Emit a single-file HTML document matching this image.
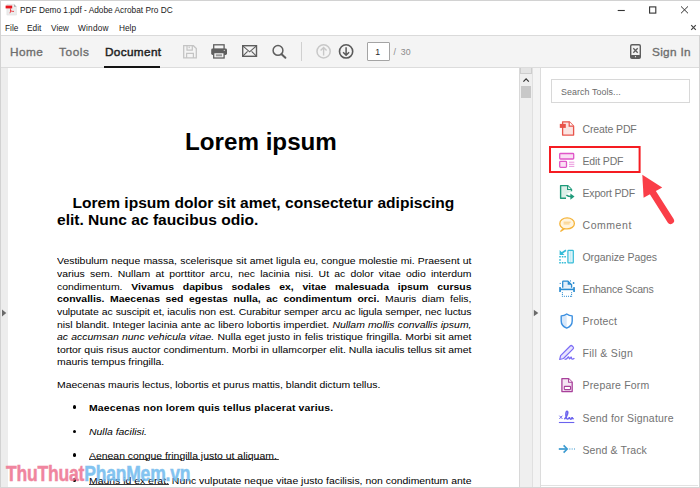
<!DOCTYPE html>
<html><head><meta charset="utf-8">
<style>
*{margin:0;padding:0;box-sizing:border-box}
html,body{width:700px;height:488px;overflow:hidden;background:#fff;font-family:"Liberation Sans",sans-serif}
.a{position:absolute;white-space:nowrap}
.t{line-height:1}
.mn{position:absolute;top:23.5px;font-size:8.3px;line-height:1;color:#1a1a1a;white-space:nowrap}
.tab{position:absolute;top:46.5px;font-size:11.8px;line-height:1;font-weight:normal;color:#6e6e6e;white-space:nowrap;-webkit-text-stroke:0.35px currentColor}
.tl{position:absolute;left:582.5px;font-size:10.5px;line-height:1;color:#727272;white-space:nowrap}
.bl{position:absolute;left:57px;width:345.4px;font-size:8.7px;line-height:8.7px;color:#000;text-align:justify;text-align-last:justify;white-space:nowrap;transform:scaleX(1.2);transform-origin:0 0}
.bl.l{text-align-last:left}
.bu{position:absolute;left:88.5px;font-size:8.7px;line-height:8.7px;color:#000;white-space:nowrap;transform:scaleX(1.2);transform-origin:0 0}
u{text-decoration-thickness:1px;text-underline-offset:0px;text-decoration-color:#3a3a3a}
.dot{position:absolute;left:72.6px;width:3.8px;height:3.8px;border-radius:50%;background:#000}
#ov{position:absolute;left:0;top:0}
</style></head><body>
<!-- frame borders -->
<div class="a" style="left:0;top:0;width:700px;height:1px;background:#d2d2d2"></div>
<div class="a" style="left:0;top:0;width:1px;height:488px;background:#d2d2d2"></div>

<!-- title -->
<div class="a t" style="left:20px;top:5.9px;font-size:8.3px;color:#1a1a1a">PDF Demo 1.pdf - Adobe Acrobat Pro DC</div>

<!-- menu -->
<div class="mn" style="left:5px">File</div>
<div class="mn" style="left:27px">Edit</div>
<div class="mn" style="left:51px">View</div>
<div class="mn" style="left:78px;letter-spacing:0.2px">Window</div>
<div class="mn" style="left:119px">Help</div>

<!-- toolbar -->
<div class="a" style="left:1px;top:35px;width:699px;height:33px;background:#f4f4f4;border-top:1px solid #dadada;border-bottom:1px solid #dcdcdc"></div>
<div class="tab" style="left:10px;letter-spacing:0.45px">Home</div>
<div class="tab" style="left:59px;letter-spacing:0.6px">Tools</div>
<div class="tab" style="left:105px;color:#222;letter-spacing:0.33px;-webkit-text-stroke:0.45px #222">Document</div>
<div class="a" style="left:104px;top:66px;width:56px;height:2px;background:#141414"></div>
<div class="a" style="left:301px;top:42px;width:1px;height:19px;background:#d0d0d0"></div>
<div class="a" style="left:367px;top:42px;width:23px;height:19px;background:#fff;border:1.2px solid #a4a4a4;border-radius:1px"></div>
<div class="a t" style="left:375.3px;top:47.5px;font-size:8.8px;color:#2a2a2a">1</div>
<div class="a t" style="left:393.5px;top:47.5px;font-size:8.8px;color:#8a8a8a">/&nbsp;&nbsp;30</div>
<div class="tab" style="left:652px;letter-spacing:0.3px">Sign In</div>

<!-- document area -->
<div class="a" style="left:1px;top:68px;width:7px;height:420px;background:#ededed"></div>
<div class="a" style="left:519px;top:68px;width:14px;height:420px;background:#efefef;border-left:1px solid #d8d8d8;border-right:1px solid #e0e0e0"></div>
<div class="a" style="left:520px;top:68px;width:12px;height:6px;background:#e4e4e4;border:1px solid #cdcdcd;border-top:none"></div>
<div class="a" style="left:521px;top:86px;width:10px;height:11.5px;background:#c8c8c8"></div>
<div class="a" style="left:533px;top:68px;width:8px;height:420px;background:#f4f4f4;border-right:1px solid #dcdcdc"></div>

<!-- right panel -->
<div class="a" style="left:699px;top:35px;width:1px;height:453px;background:#d4d4d4"></div>
<div class="a" style="left:541px;top:484.5px;width:157px;height:1.5px;background:#e2e2e2"></div>
<div class="a" style="left:0;top:487px;width:700px;height:1px;background:#d6d6d6"></div>
<div class="a" style="left:551px;top:79px;width:139px;height:24px;border:1px solid #d8d8d8;background:#fff"></div>
<div class="a t" style="left:561px;top:88.2px;font-size:8.9px;color:#6a6a6a;letter-spacing:0.08px">Search Tools...</div>

<div class="tl" style="top:124px;letter-spacing:-0.13px">Create PDF</div>
<div class="tl" style="top:156px;letter-spacing:-0.14px">Edit PDF</div>
<div class="tl" style="top:188.1px;letter-spacing:-0.18px">Export PDF</div>
<div class="tl" style="top:220.2px;letter-spacing:0.55px">Comment</div>
<div class="tl" style="top:252.2px;letter-spacing:-0.06px">Organize Pages</div>
<div class="tl" style="top:284.3px;letter-spacing:-0.19px">Enhance Scans</div>
<div class="tl" style="top:316.3px;letter-spacing:0.20px">Protect</div>
<div class="tl" style="top:348.4px;letter-spacing:0.30px">Fill &amp; Sign</div>
<div class="tl" style="top:380.4px;letter-spacing:0.18px">Prepare Form</div>
<div class="tl" style="top:412.5px;letter-spacing:0.21px">Send for Signature</div>
<div class="tl" style="top:444.5px;letter-spacing:0.12px">Send &amp; Track</div>

<!-- page content -->
<div class="a t" style="left:185px;top:129.5px;font-size:24.2px;font-weight:bold;color:#000">Lorem ipsum</div>
<div class="a t" style="left:72.5px;top:194.8px;font-size:15.55px;font-weight:bold;color:#000">Lorem ipsum dolor sit amet, consectetur adipiscing</div>
<div class="a t" style="left:57px;top:211.7px;font-size:15.55px;font-weight:bold;color:#000">elit. Nunc ac faucibus odio.</div>
<div class="bl" style="top:257.43px">Vestibulum neque massa, scelerisque sit amet ligula eu, congue molestie mi. Praesent ut</div>
<div class="bl" style="top:270.05px">varius sem. Nullam at porttitor arcu, nec lacinia nisi. Ut ac dolor vitae odio interdum</div>
<div class="bl" style="top:282.67px">condimentum. <b>Vivamus dapibus sodales ex, vitae malesuada ipsum cursus</b></div>
<div class="bl" style="top:295.29px"><b>convallis. Maecenas sed egestas nulla, ac condimentum orci.</b> Mauris diam felis,</div>
<div class="bl" style="top:307.91px;letter-spacing:-0.06px">vulputate ac suscipit et, iaculis non est. Curabitur semper arcu ac ligula semper, nec luctus</div>
<div class="bl" style="top:320.53px">nisl blandit. Integer lacinia ante ac libero lobortis imperdiet. <i>Nullam mollis convallis ipsum,</i></div>
<div class="bl" style="top:333.15px"><i>ac accumsan nunc vehicula vitae.</i> Nulla eget justo in felis tristique fringilla. Morbi sit amet</div>
<div class="bl" style="top:345.77px">tortor quis risus auctor condimentum. Morbi in ullamcorper elit. Nulla iaculis tellus sit amet</div>
<div class="bl l" style="top:358.39px">mauris tempus fringilla.</div>
<div class="bl l" style="top:381.43px">Maecenas mauris lectus, lobortis et purus mattis, blandit dictum tellus.</div>
<div class="dot" style="top:405.3px"></div>
<div class="bu" style="top:404.23px;letter-spacing:0.13px"><b>Maecenas non lorem quis tellus placerat varius.</b></div>
<div class="dot" style="top:429.6px"></div>
<div class="bu" style="top:428.43px"><i>Nulla facilisi.</i></div>
<div class="dot" style="top:453.4px"></div>
<div class="bu" style="top:451.8px"><u>Aenean congue fringilla justo ut aliquam.&#8201;</u></div>
<div class="dot" style="top:477.8px"></div>
<div class="bu" style="top:477.03px"><u>Mauris id ex erat.</u> Nunc vulputate neque vitae justo facilisis, non condimentum ante</div>

<!-- ICONS OVERLAY -->
<svg id="ov" width="700" height="488" viewBox="0 0 700 488">
<!-- app icon -->
<path d="M6.9 4.3H14.2L16.4 6.5V15.1H6.9Z" fill="#ececec" stroke="#dadada" stroke-width="0.5"/>
<path d="M14 4.3V6.7H16.4Z" fill="#a8a8a8"/>
<rect x="5.6" y="5.6" width="6.6" height="2.8" fill="#e8141c"/>
<path d="M10.4 8.4C10.8 10.5 10.6 12 9.8 13.2M10.6 10.8C11.8 11.3 13 11.6 14 11.4" fill="none" stroke="#e8141c" stroke-width="0.8"/>
<!-- window controls -->
<path d="M617.7 10.5H624.8" stroke="#333" stroke-width="1.1"/>
<rect x="649.6" y="6.9" width="6.2" height="6.2" fill="none" stroke="#333" stroke-width="1.1"/>
<path d="M681 6.4L688 13.3M688 6.4L681 13.3" stroke="#333" stroke-width="1"/>
<path d="M691.2 25.2L695.8 29.8M695.8 25.2L691.2 29.8" stroke="#444" stroke-width="1.2"/>
<!-- save (disabled) -->
<path d="M183.7 45.7H193.4L196.3 48.6V57.9H183.7Z" fill="none" stroke="#c4c4c4" stroke-width="1.3"/>
<path d="M187 45.7V50.2H192.3V45.7" fill="none" stroke="#c4c4c4" stroke-width="1.2"/>
<rect x="188.6" y="46.5" width="1.2" height="1.6" fill="#c4c4c4"/>
<path d="M186.6 57.9V53.3H193.4V57.9" fill="none" stroke="#c4c4c4" stroke-width="1.2"/>
<!-- print -->
<rect x="213.7" y="44.8" width="10.4" height="4.6" fill="none" stroke="#5e5e5e" stroke-width="1.3"/>
<rect x="211.2" y="48.6" width="15.8" height="6.4" rx="1.4" fill="#5e5e5e"/>
<rect x="213.7" y="52.6" width="10.4" height="5.4" fill="#f4f4f4" stroke="#5e5e5e" stroke-width="1.3"/>
<rect x="215.8" y="54.3" width="6.2" height="2" fill="#9a9a9a"/>
<circle cx="224.3" cy="50.4" r="0.6" fill="#cfcfcf"/>
<!-- mail -->
<rect x="242.7" y="45.7" width="13.8" height="10.6" fill="none" stroke="#5e5e5e" stroke-width="1.4"/>
<path d="M242.8 45.9L249.6 51.8L256.4 45.9M242.8 56.2L247.6 51.3M256.4 56.2L251.6 51.3" fill="none" stroke="#5e5e5e" stroke-width="1.1"/>
<!-- search -->
<circle cx="278" cy="50.4" r="4.9" fill="none" stroke="#5e5e5e" stroke-width="1.5"/>
<path d="M281.6 54.2L285.4 57.8" stroke="#5e5e5e" stroke-width="2" stroke-linecap="round"/>
<!-- up/down -->
<circle cx="323.6" cy="51.4" r="6.6" fill="none" stroke="#c8c8c8" stroke-width="1.5"/>
<path d="M323.6 55.5V47.6M320.6 50.6L323.6 47.6L326.6 50.6" fill="none" stroke="#c8c8c8" stroke-width="1.4"/>
<circle cx="346.1" cy="51.4" r="6.6" fill="none" stroke="#5a5a5a" stroke-width="1.6"/>
<path d="M346.1 47.3V55.2M343.1 52.2L346.1 55.2L349.1 52.2" fill="none" stroke="#5a5a5a" stroke-width="1.5"/>
<!-- sign-in device -->
<rect x="630.7" y="44.7" width="9.6" height="13.6" rx="1.3" fill="none" stroke="#5e5e5e" stroke-width="1.4"/>
<rect x="630.7" y="55" width="9.6" height="3.3" rx="0.8" fill="#5e5e5e"/>
<circle cx="635.5" cy="56.7" r="0.6" fill="#f4f4f4"/>
<path d="M633.3 48.3L637.7 52.7M637.7 48.3L633.3 52.7" stroke="#5e5e5e" stroke-width="1.3"/>
<!-- doc area arrows -->
<path d="M2 309.5L6.3 313L2 316.5Z" fill="#6a6a6a"/>
<path d="M533.8 309.8L538.3 313L533.8 316.3Z" fill="#6a6a6a"/>
<path d="M523.4 81.6L526.1 78.9L528.8 81.6" fill="none" stroke="#333" stroke-width="1.2"/>

<!-- tool icons -->
<!-- create pdf -->
<path d="M562.6 121.8H569.2L573.6 126.2V135.1H562.6Z" fill="#fbe4e2" stroke="#e8534a" stroke-width="1.3" stroke-linejoin="round"/>
<path d="M569.2 121.8V126.2H573.6" fill="#fff" stroke="#e8534a" stroke-width="1.2"/>
<rect x="559.8" y="123.9" width="6" height="4" fill="#e8534a"/>
<!-- edit pdf -->
<rect x="559.7" y="153.5" width="14" height="5.5" rx="0.8" fill="#fae0f4" stroke="#e055c8" stroke-width="1.3"/>
<rect x="559.7" y="161.4" width="6.8" height="5.9" rx="0.8" fill="#fae0f4" stroke="#e055c8" stroke-width="1.3"/>
<path d="M569 162.2H574.3M569 164.3H574.3M569 166.4H574.3" stroke="#e98ad8" stroke-width="0.9"/>
<!-- export pdf -->
<path d="M560.6 185.6H567.6L571.5 189.5V191.5L566.3 194V198.2H560.6Z" fill="#dcefe9"/>
<path d="M566 198.2H560.6V185.6H567.6L571.5 189.5V191.2" fill="none" stroke="#1f9a7a" stroke-width="1.4" stroke-linejoin="round"/>
<path d="M567.6 185.8V189.5H571.3" fill="#fff" stroke="#1f9a7a" stroke-width="1.2"/>
<path d="M566.4 195.2Q568.3 196.6 571.2 196.6" fill="none" stroke="#1f9a7a" stroke-width="1.5"/>
<path d="M570.4 193.4L574.5 196.6L570.4 199.8Z" fill="#1f9a7a"/>
<!-- comment -->
<path d="M563.4 228.5Q559.8 226.6 559.8 223.4C559.8 220.1 563.1 217.9 567.1 217.9C571.1 217.9 574.4 220.1 574.4 223.4C574.4 226.7 571.1 228.9 567.1 228.9Q565.6 228.9 564.6 228.6L560.8 231.2Z" fill="#fff4de" stroke="#f5b43a" stroke-width="1.3" stroke-linejoin="round"/>
<path d="M563.6 222.2H570.6M563.6 223.9H569.6" stroke="#f7c670" stroke-width="0.9"/>
<!-- organize pages -->
<rect x="567.9" y="250.3" width="5.4" height="12.6" rx="0.6" fill="#e0f4f9" stroke="#35bcd8" stroke-width="1.2"/>
<path d="M570.6 251V262.2" stroke="#bfe8f2" stroke-width="0.8"/>
<path d="M559.6 250.1V255H564.5Z" fill="#35bcd8"/>
<path d="M561.2 253.5L566 250.3" stroke="#35bcd8" stroke-width="1.7"/>
<g fill="#35bcd8">
<rect x="559.2" y="256" width="1.6" height="1.5"/><rect x="561.8" y="256" width="1.6" height="1.5"/><rect x="564.3" y="256" width="1.6" height="1.5"/>
<rect x="559.2" y="259.2" width="1.6" height="1.5"/>
<rect x="559.2" y="262" width="1.6" height="1.5"/><rect x="561.8" y="262" width="1.6" height="1.5"/><rect x="564.3" y="262" width="1.6" height="1.5"/>
</g>
<!-- enhance scans -->
<path d="M562.7 287.8V281.7Q562.7 281.1 563.3 281.1H567.9L571.6 284.8V287.8" fill="#e2eef9" stroke="#2a8bd0" stroke-width="1.3"/>
<path d="M567.7 281.3V284.7H571.4Z" fill="#2a8bd0"/>
<path d="M560 289.4H574" stroke="#2a8bd0" stroke-width="1.6"/>
<rect x="559.2" y="286.9" width="1.7" height="5.2" rx="0.5" fill="#2a8bd0"/>
<rect x="573.2" y="286.9" width="1.7" height="5.2" rx="0.5" fill="#2a8bd0"/>
<g fill="#2a8bd0">
<rect x="561.9" y="292.2" width="1" height="1"/><rect x="571.1" y="292.2" width="1" height="1"/>
<rect x="561.9" y="294" width="1" height="1"/><rect x="571.1" y="294" width="1" height="1"/>
<rect x="561.9" y="295.8" width="1" height="1"/><rect x="563.9" y="295.8" width="1" height="1"/><rect x="566" y="295.8" width="1" height="1"/><rect x="568" y="295.8" width="1" height="1"/><rect x="570" y="295.8" width="1" height="1"/><rect x="571.1" y="295.8" width="1" height="1"/>
<circle cx="560.2" cy="283.4" r="0.6"/><circle cx="570.5" cy="280.9" r="0.6"/><circle cx="573.6" cy="283" r="0.9"/>
</g>
<!-- protect -->
<path d="M566.7 314.2Q564.6 315.7 561.3 315.9V320.9Q561.3 325.7 566.7 328Z" fill="#d8e8fa"/>
<path d="M566.7 314Q564.3 315.8 561.2 315.9V320.9Q561.2 325.8 566.7 328.1Q572.2 325.8 572.2 320.9V315.9Q569.1 315.8 566.7 314Z" fill="none" stroke="#3b8fe0" stroke-width="1.4" stroke-linejoin="round"/>
<!-- fill & sign -->
<path d="M559.7 359.5L560.6 355.6L570.2 346Q571.2 345 572.2 346L573.1 346.9Q574.1 347.9 573.1 348.9L563.5 358.5Z" fill="#e8e4fd" stroke="#7b6cf6" stroke-width="1.2" stroke-linejoin="round"/>
<path d="M564.6 359.3Q566.8 359.4 567.9 357.4Q568.7 356.1 569 357.9Q569.4 359.8 570.6 357.6Q571.2 356.3 571.5 358.2Q572 360 574.4 358.2" fill="none" stroke="#7b6cf6" stroke-width="1.35"/>
<!-- prepare form -->
<path d="M561.9 378.6H568.6L572.2 382.2V391.6H561.9Z" fill="#f4e4f2" stroke="#a8409a" stroke-width="1.3" stroke-linejoin="round"/>
<path d="M568.6 378.7V382.3H572.1" fill="#fff" stroke="#a8409a" stroke-width="1.1"/>
<rect x="564.3" y="386.4" width="6.2" height="3.2" rx="0.6" fill="#fff" stroke="#a8409a" stroke-width="1.1"/>
<!-- send for signature -->
<path d="M559.4 415.7L562.4 418.9M562.4 415.7L559.4 418.9" stroke="#6b63ee" stroke-width="1"/>
<path d="M564.4 419.2Q566.6 417 567.5 414.2Q568.3 411.3 567.1 411.2Q565.7 411.3 565.9 415.3Q566.1 419.3 567.8 419.1Q568.9 419 569.4 417.1Q569.7 419.3 570.8 419.2Q571.8 419 572.1 417.1Q572.5 419.3 573.7 418.4" fill="none" stroke="#6b63ee" stroke-width="1.5"/>
<path d="M558.9 422.5H574.3" stroke="#6b63ee" stroke-width="1.1"/>
<!-- send & track -->
<path d="M558.8 449H567" stroke="#3a9ad0" stroke-width="1.7"/>
<path d="M563.6 445.4L567.2 449L563.6 452.6" fill="none" stroke="#3a9ad0" stroke-width="1.6"/>
<g fill="#5aaad8"><rect x="569.4" y="448.3" width="0.9" height="1.4"/><rect x="571.7" y="448.3" width="0.9" height="1.4"/><rect x="574" y="448.3" width="0.9" height="1.4"/></g>

<!-- highlight box + arrow -->
<rect x="550" y="147" width="89.6" height="25" fill="none" stroke="#f51c22" stroke-width="2"/>
<path d="M642.3 174.8L643.6 197.8L662.2 187.4Z" fill="#fa3e48"/>
<path d="M651.5 190.5L670.6 220.6" stroke="#fa3e48" stroke-width="6.9" stroke-linecap="round"/>
</svg>

<!-- watermark -->
<div class="a t" style="left:5.5px;top:464.4px;font-size:21.5px;font-weight:bold;transform:scaleX(0.815);transform-origin:0 0;letter-spacing:-0.25px;-webkit-text-stroke:0.5px;opacity:0.88"><span style="color:#ee7592;-webkit-text-stroke-color:#ee7592">ThuThuat</span><span style="color:#72bbee;-webkit-text-stroke-color:#72bbee">PhanMem.vn</span></div>
</body></html>
